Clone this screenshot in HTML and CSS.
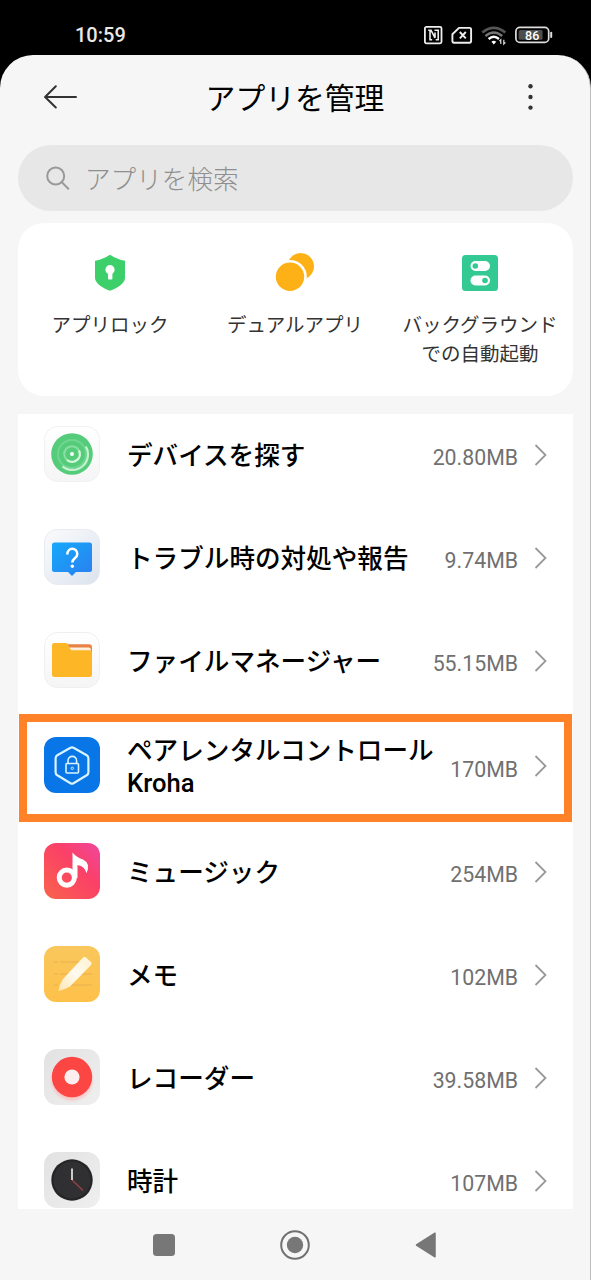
FILE: index.html
```html
<!DOCTYPE html>
<html lang="ja">
<head>
<meta charset="utf-8">
<title>アプリを管理</title>
<link rel="stylesheet" href="styles.css">
</head>
<body>
<div class="phone">
  <div class="status">
    <span class="clock">10:59</span>
    <svg class="status-icons" width="132" height="24" viewBox="0 0 132 24" fill="none">
      <rect x="1.9" y="3.9" width="16.6" height="16.4" rx="1.5" stroke="#eee" stroke-width="1.8"/>
      <path d="M5.200 7.200H8l4 7.600V9.500M7 7.200v9.600h2.200M11.500 7.200h3.700v9.600h-2.500" stroke="#eee" stroke-width="1.6"/>
      <path d="M36 4.9h10.5q1.6 0 1.6 1.6v11.6q0 1.6-1.6 1.6H31q-1.6 0-1.6-1.6V11.3z" stroke="#eee" stroke-width="1.9" stroke-linejoin="round"/>
      <path d="M36.800 9l6 6.400M42.800 9l-6 6.400" stroke="#eee" stroke-width="1.9"/>
      <path d="M59.3 9.5q11.5-9.4 23 0" stroke="#555" stroke-width="2.7"/>
      <path d="M62.4 13q8.4-7 16.8 0" stroke="#777" stroke-width="2.4"/>
      <path d="M65.6 16q5.2-4.6 10.4 0" stroke="#fff" stroke-width="2.4"/>
      <path d="M68.4 18.7q2.4-2 4.8 0l-2.4 2.7z" fill="#fff"/>
      <path d="M77.800 21v-4.300l-1.400 1.500M80.800 16.8v4.200l1.600-1.600" stroke="#ddd" stroke-width="1.2"/>
      <rect x="92.9" y="4.4" width="32.8" height="15" rx="4" stroke="#ddd" stroke-width="1.7"/>
      <rect x="95.6" y="7" width="24" height="9.8" rx="1.5" fill="#4d4d4d"/>
      <path d="M128.2 9.8v4.3" stroke="#ddd" stroke-width="2" stroke-linecap="round"/>
      <text class="battery" x="109.2" y="16.6" text-anchor="middle">86</text>
    </svg>
  </div>
  <div class="screen">
    <header class="header">
      <svg width="34" height="24" viewBox="0 0 34 24" fill="none" stroke="#333" stroke-width="2" stroke-linecap="round" stroke-linejoin="round"><path d="M33 12H2.300M12.800 1.200L2.100 12 12.800 22.500"/></svg>
      <h1 class="title">アプリを管理</h1>
      <svg width="6" height="28" viewBox="0 0 6 28" fill="#333"><circle cx="3.500" cy="3.200" r="2.200"/><circle cx="3.500" cy="14" r="2.200"/><circle cx="3.500" cy="24.600" r="2.200"/></svg>
    </header>
    <div class="search">
      <svg width="26" height="26" viewBox="0 0 26 26" fill="none" stroke="#999" stroke-width="2"><circle cx="10.7" cy="11" r="8.5"/><path d="M16.800 17.300l7 6.900"/></svg>
      <span>アプリを検索</span>
    </div>
    <section class="tools">
      <div class="tool">
        <svg width="40" height="40" viewBox="0 0 40 40"><path d="M20 1.8Q27 6.5 35 7.8V25c0 5-8 10.5-15 12.8C13 35.500 5 30 5 25V7.800Q13 6.500 20 1.800z" fill="#3dcf69"/><circle cx="20" cy="16.700" r="4.600" fill="#fff"/><rect x="18" y="18" width="4.400" height="8.500" rx="1" fill="#fff"/></svg>
        <span>アプリロック</span>
      </div>
      <div class="tool">
        <svg width="40" height="40" viewBox="0 0 40 40"><circle cx="25.700" cy="13.300" r="13.300" fill="#fdb116"/><circle cx="15" cy="23.700" r="16.800" fill="#fff"/><circle cx="15" cy="23.700" r="14.200" fill="#fdb116"/></svg>
        <span>デュアルアプリ</span>
      </div>
      <div class="tool">
        <svg width="40" height="40" viewBox="0 0 40 40"><rect x="2" y="2" width="36" height="36" rx="3.500" fill="#32c992"/><rect x="10.500" y="8" width="19.500" height="10" rx="5" fill="#fff"/><circle cx="15.300" cy="13" r="2.800" fill="#32c992"/><rect x="10.500" y="22.500" width="19.500" height="10" rx="5" fill="#fff"/><circle cx="25" cy="27.500" r="2.800" fill="#32c992"/></svg>
        <span>バックグラウンド<br>での自動起動</span>
      </div>
    </section>
    <main class="list">
      <div class="row">
        <svg class="app" viewBox="0 0 56 56" fill="none">
          <defs><linearGradient id="pale" x2="0" y2="1"><stop stop-color="#fff"/><stop offset="1" stop-color="#f5f5f6"/></linearGradient></defs>
          <rect x=".5" y=".5" width="55" height="55" rx="13" fill="url(#pale)" stroke="#f1f1f2"/>
          <circle cx="28" cy="28" r="20.800" fill="#54cc79"/>
          <circle cx="28" cy="28" r="14" stroke="#71d590" stroke-width="2"/><circle cx="28" cy="28" r="7.800" stroke="#8bdfa5" stroke-width="2"/>
          <path d="M41.800 20.500A15.500 15.500 0 0 1 18.500 40.300" stroke="#c4f1d0" stroke-width="2.200"/>
          <path d="M35 24.500A7.800 7.800 0 0 1 23 34" stroke="#d4f6dd" stroke-width="2.200"/>
          <circle cx="28" cy="28" r="2" fill="#fff"/>
        </svg>
        <span class="name">デバイスを探す</span><span class="size">20.80MB</span>
        <svg class="chev" viewBox="0 0 14 22"><path d="M1.500 1l10 10-10 10"/></svg>
      </div>
      <div class="row">
        <svg class="app" viewBox="0 0 56 56">
          <defs><linearGradient id="mist" x2="1" y2="1"><stop stop-color="#fafbfc"/><stop offset="1" stop-color="#dce3ee"/></linearGradient><linearGradient id="sky" x2="1" y2="1"><stop stop-color="#16a9fa"/><stop offset="1" stop-color="#2b7ff0"/></linearGradient></defs>
          <rect x=".5" y=".5" width="55" height="55" rx="13" fill="url(#mist)" stroke="#e7eaf0"/>
          <path d="M10.500 13.500h35q2.500 0 2.500 2.500v24.500q0 2.500-2.500 2.500H32l-4 4-4-4H10.500Q8 43 8 40.500V16q0-2.500 2.500-2.500z" fill="url(#sky)"/>
          <path d="M23.300 25.500c0-7.500 10-7.500 10-.5 0 4.500-5 4-5 8.500" fill="none" stroke="#fff" stroke-width="2.500"/><circle cx="28.300" cy="37.300" r="1.700" fill="#fff"/>
        </svg>
        <span class="name">トラブル時の対処や報告</span><span class="size">9.74MB</span>
        <svg class="chev" viewBox="0 0 14 22"><path d="M1.500 1l10 10-10 10"/></svg>
      </div>
      <div class="row">
        <svg class="app" viewBox="0 0 56 56">
          <rect x=".5" y=".5" width="55" height="55" rx="13" fill="url(#pale)" stroke="#efeff0"/>
          <path d="M22 12.300h23q3 0 3 3V32H22z" fill="#e98145"/><path d="M25 15.500h20q2 0 2 2.500v4H27z" fill="#fff0dc"/>
          <path d="M10.500 11h11.500q1.500 0 2.200 1.500l1.800 4.300q.7 1.400 2 1.400H45.500q2.500 0 2.500 2.500v21.800q0 2.500-2.500 2.500h-35Q8 45 8 42.500v-29Q8 11 10.500 11z" fill="#fdb626"/>
        </svg>
        <span class="name">ファイルマネージャー</span><span class="size">55.15MB</span>
        <svg class="chev" viewBox="0 0 14 22"><path d="M1.500 1l10 10-10 10"/></svg>
      </div>
      <div class="row row-marked">
        <svg class="app" viewBox="0 0 56 56" fill="none" stroke="#d9f3ff" stroke-linejoin="round">
          <rect width="56" height="56" rx="12" fill="#0876e6" stroke="none"/>
          <path d="M26.500 10.800q1.500-.8 3 0l13.200 7.500q1.700 1 1.700 3v14q0 2-1.700 3l-13.200 7.900q-1.500.8-3 0l-13.200-7.900q-1.700-1-1.700-3v-14q0-2 1.700-3z" stroke-width="2.200"/>
          <rect x="22" y="26.500" width="12.500" height="9.500" rx="1" stroke-width="1.600"/><path d="M24 26v-2.300a4.300 4.300 0 0 1 8.600 0V26" stroke-width="1.600"/><circle cx="28.300" cy="31.300" r="1.200" stroke-width="1"/>
        </svg>
        <span class="name">ペアレンタルコントロール<br>Kroha</span><span class="size">170MB</span>
        <svg class="chev" viewBox="0 0 14 22"><path d="M1.500 1l10 10-10 10"/></svg>
      </div>
      <div class="row">
        <svg class="app" viewBox="0 0 56 56">
          <defs><linearGradient id="rose" x1="1" y1="0" x2="0" y2="1"><stop stop-color="#ee479f"/><stop offset=".4" stop-color="#fb4068"/><stop offset="1" stop-color="#f9634b"/></linearGradient></defs>
          <rect width="56" height="56" rx="12" fill="url(#rose)"/>
          <circle cx="22.800" cy="34.600" r="7.600" fill="none" stroke="#fff" stroke-width="5"/>
          <path d="M28.500 9.500Q32 14 39 16.500q8 4 3.500 13.800-1.500-6.800-9-8.300V35h-5z" fill="#fff"/>
        </svg>
        <span class="name">ミュージック</span><span class="size">254MB</span>
        <svg class="chev" viewBox="0 0 14 22"><path d="M1.500 1l10 10-10 10"/></svg>
      </div>
      <div class="row">
        <svg class="app" viewBox="0 0 56 56">
          <defs><linearGradient id="memo" x2="0" y2="1"><stop stop-color="#f9c75c"/><stop offset="1" stop-color="#fec14a"/></linearGradient><linearGradient id="pen" x1="1" x2="0" y2="1"><stop stop-color="#fff2ce"/><stop offset=".5" stop-color="#fffaf0"/><stop offset="1" stop-color="#fde7b2"/></linearGradient></defs>
          <rect width="56" height="56" rx="12" fill="url(#memo)"/>
          <path d="M10 16h4M16 16h28M10 28h4M16 28h32M10 39h4M16 39h32" stroke="#e6b04e"/>
          <path d="M39 11.500q1.500-1.500 3 0L47 16q1.500 1.500 0 3L26 40.500q-5 3-11.500 4.500 1-7 4.500-12z" fill="url(#pen)"/>
        </svg>
        <span class="name">メモ</span><span class="size">102MB</span>
        <svg class="chev" viewBox="0 0 14 22"><path d="M1.500 1l10 10-10 10"/></svg>
      </div>
      <div class="row">
        <svg class="app" viewBox="0 0 56 56">
          <defs><linearGradient id="silver" x2="1" y2="1"><stop stop-color="#e2e2e3"/><stop offset="1" stop-color="#efeff0"/></linearGradient><radialGradient id="glow"><stop offset=".7" stop-color="#ffb0ad"/><stop offset="1" stop-color="#ffb0ad" stop-opacity="0"/></radialGradient></defs>
          <rect width="56" height="56" rx="13" fill="url(#silver)"/>
          <circle cx="28" cy="31" r="22.500" fill="url(#glow)"/><circle cx="28" cy="28" r="20.200" fill="#fb4644"/><circle cx="28" cy="28" r="7.600" fill="#fceeee"/>
        </svg>
        <span class="name">レコーダー</span><span class="size">39.58MB</span>
        <svg class="chev" viewBox="0 0 14 22"><path d="M1.500 1l10 10-10 10"/></svg>
      </div>
      <div class="row">
        <svg class="app" viewBox="0 0 56 56">
          <rect width="56" height="56" rx="13" fill="url(#silver)"/>
          <circle cx="28" cy="28" r="20.700" fill="#252527"/><circle cx="28" cy="28" r="18.500" fill="#303032"/>
          <path d="M28 28l11 10.500" stroke="#99404b" stroke-width="1.300"/><path d="M28 16.500V28" stroke="#fff" stroke-width="1.500"/>
        </svg>
        <span class="name">時計</span><span class="size">107MB</span>
        <svg class="chev" viewBox="0 0 14 22"><path d="M1.500 1l10 10-10 10"/></svg>
      </div>
    </main>
    <nav class="nav">
      <svg width="22" height="22"><rect width="22" height="22" rx="3.500" fill="#777"/></svg>
      <svg width="30" height="30" fill="none"><circle cx="15" cy="15" r="13.800" stroke="#707070" stroke-width="2"/><circle cx="15" cy="15" r="8.200" fill="#777"/></svg>
      <svg width="22" height="26"><path d="M20 1.200V24.800L1.500 13z" fill="#777" stroke="#777" stroke-width="1.500" stroke-linejoin="round"/></svg>
    </nav>
  </div>
</div>
</body>
</html>
```
FILE: styles.css
```css
* { box-sizing: border-box; }
body { margin: 0; background: #000; font-family: Roboto, "Noto Sans CJK JP", sans-serif; }
svg { display: block; flex: none; }
.phone { width: 591px; height: 1280px; display: flex; flex-direction: column; overflow: hidden; }
.status { height: 55px; flex: none; display: flex; justify-content: space-between; align-items: center; padding: 14px 36px 0 75px; }
.clock { color: #e8e8e8; font-size: 20px; font-weight: 500; line-height: 24px; }
.battery { font: 500 12.500px Roboto, sans-serif; fill: #fff; }
.screen { flex: 1; min-height: 0; display: flex; flex-direction: column; background: #f6f6f6; border-radius: 33px 33px 0 0; border-right: 1px solid #bcbcbc; padding: 0 17px 0 18px; }
.header { height: 90px; flex: none; display: flex; justify-content: space-between; align-items: center; padding: 0 40px 6px 25px; }
.title { margin: 0 14px 0 0; padding-top: 3px; font-size: 29.800px; font-weight: 400; line-height: 40px; color: #000; }
.search { height: 66px; flex: none; display: flex; align-items: center; gap: 14px; padding-left: 27px; border-radius: 33px; background: #e7e7e7; color: #8f8f8f; font-size: 25.600px; line-height: 36px; font-weight: 300; }
.search span { padding-top: 4px; }
.tools { height: 173px; flex: none; margin-top: 12px; padding: 30px 0 0; border-radius: 26px; background: #fff; display: grid; grid-template-columns: repeat(3, 185px); }
.tool { display: flex; flex-direction: column; align-items: center; gap: 18px; padding-right: 1px; text-align: center; color: #333; font-size: 19.500px; line-height: 29px; white-space: nowrap; }
.list { height: 795px; flex: none; margin-top: 18px; overflow: hidden; background: #fff; }
.row { height: 103px; display: flex; align-items: center; padding: 0 25px 0 26px; }
.row:first-child { margin-top: -11.500px; }
.row-marked { position: relative; height: 108px; }
.row-marked::after { content: ""; position: absolute; inset: 2.500px 1px -2.500px 1px; border: 8px solid #ff8229; }
.row-marked .name { padding-top: 2px; }
.row-marked .app { margin-top: -1px; }
.app { width: 56px; height: 56px; }
.name { flex: 1; margin-left: 27px; padding-top: 3px; font-size: 25.600px; font-weight: 500; line-height: 32px; color: #000; white-space: nowrap; }
.size { margin: 8px 16px 0 0; font-size: 21.300px; line-height: 26px; color: #707070; }
.chev { width: 14px; height: 22px; margin-top: 1px; fill: none; stroke: #999; stroke-width: 1.800; }
.nav { flex: 1; display: flex; align-items: center; justify-content: space-between; padding: 0 136px 0 134px; }
.nav svg:first-child { margin-left: 1px; }
```
